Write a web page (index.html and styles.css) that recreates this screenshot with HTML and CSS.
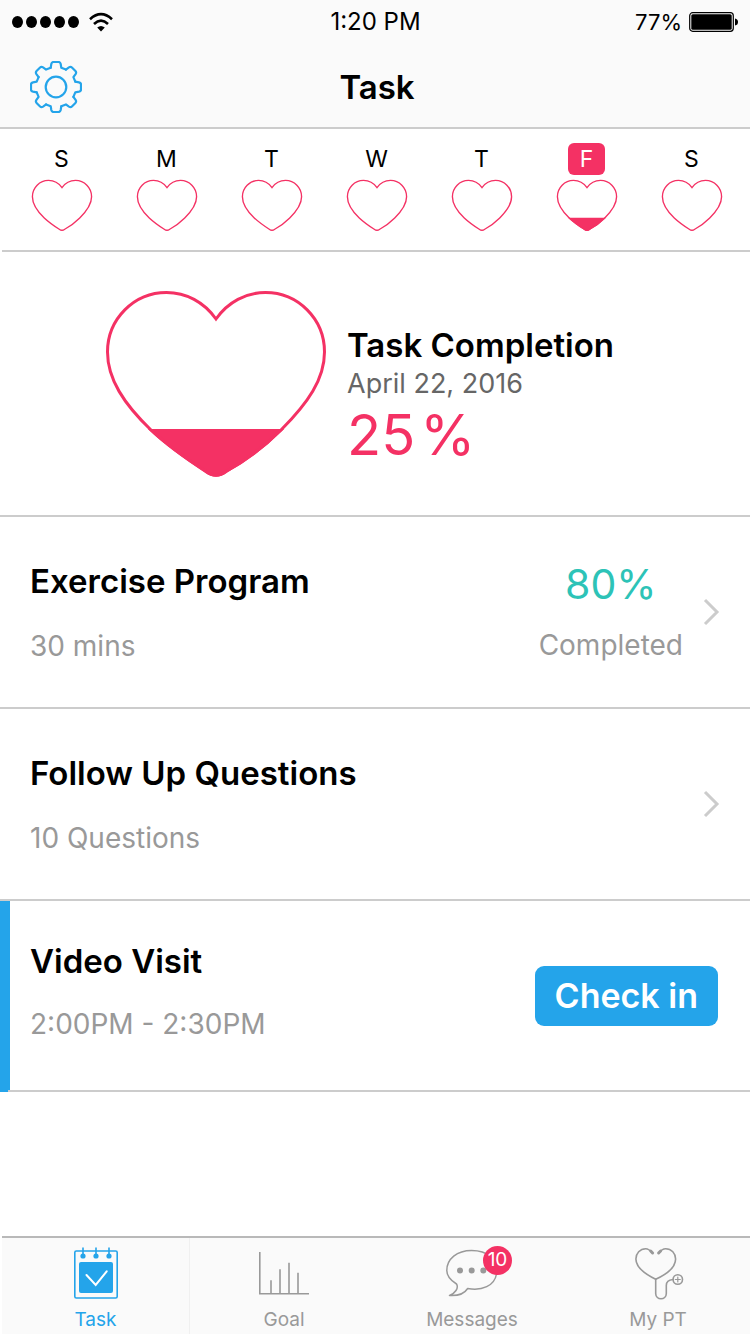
FILE: index.html
```html
<!DOCTYPE html>
<html lang="en">
<head>
<meta charset="utf-8">
<meta name="viewport" content="width=device-width, initial-scale=1">
<title>Task</title>
<link rel="stylesheet" href="styles.css">
</head>
<body>
<svg class="defs" aria-hidden="true">
  <defs>
    <path id="heart" d="M110 28C98 11 80 1.5 60.5 1.5C28 1.5 1.5 28 1.5 61C1.5 88 18 113 45 139C62 155 83 169.500 100 180.500Q110 188 120 180.500C137 171 158 156 175 139C202 112 218.500 88 218.500 61C218.500 28 192 1.5 159.500 1.5C140 1.5 122 11 110 28Z"/>
    <clipPath id="quarter"><rect x="0" y="138" width="220" height="50"/></clipPath>
    <path id="tooth" d="M-5.300-19.300L-4.700-23Q-4.300-25-2.500-25H2.500Q4.300-25 4.700-23L5.300-19.300L9.900-17.400"/>
  </defs>
</svg>

<header class="top">
  <div class="status">
    <div class="signal">
      <i class="dot"></i><i class="dot"></i><i class="dot"></i><i class="dot"></i><i class="dot"></i>
      <svg class="wifi" width="24" height="20" viewBox="0 0 24 20" fill="none" stroke="#000" stroke-width="2.600">
        <path d="M1 7.200Q12-2.800 23 7.200"/><path d="M5 12Q12 5.400 19 12"/><path d="M8.200 15.400Q12 12.400 15.800 15.400L12 19.600Z" fill="#000" stroke="none"/>
      </svg>
    </div>
    <span class="time">1:20 PM</span>
    <div class="power">
      <span>77%</span>
      <svg width="50" height="20" viewBox="0 0 50 20">
        <rect x=".7" y=".7" width="43.600" height="18.600" rx="3" fill="none" stroke="#000" stroke-width="1.200"/>
        <rect x="2.300" y="2.300" width="40.400" height="15.400" rx="1.500"/>
        <path d="M46 6.500Q49 7 49 10T46 13.500Z"/>
      </svg>
    </div>
  </div>
  <div class="nav">
    <button class="gear" aria-label="Settings">
      <svg width="52" height="52" viewBox="-26 -26 52 52" fill="none" stroke="#24a4ea" stroke-width="2.200" stroke-linecap="round" stroke-linejoin="round">
        <circle r="10.300"/>
        <use href="#tooth"/><use href="#tooth" transform="rotate(45)"/><use href="#tooth" transform="rotate(90)"/><use href="#tooth" transform="rotate(135)"/><use href="#tooth" transform="rotate(180)"/><use href="#tooth" transform="rotate(225)"/><use href="#tooth" transform="rotate(270)"/><use href="#tooth" transform="rotate(315)"/>
      </svg>
    </button>
    <h1 class="title">Task</h1>
  </div>
</header>

<main>
  <ol class="week">
    <li class="day"><span class="letter">S</span><svg class="mini" viewBox="0 0 220 187"><use href="#heart"/></svg></li>
    <li class="day"><span class="letter">M</span><svg class="mini" viewBox="0 0 220 187"><use href="#heart"/></svg></li>
    <li class="day"><span class="letter">T</span><svg class="mini" viewBox="0 0 220 187"><use href="#heart"/></svg></li>
    <li class="day"><span class="letter">W</span><svg class="mini" viewBox="0 0 220 187"><use href="#heart"/></svg></li>
    <li class="day"><span class="letter">T</span><svg class="mini" viewBox="0 0 220 187"><use href="#heart"/></svg></li>
    <li class="day"><span class="letter today">F</span><svg class="mini" viewBox="0 0 220 187"><use href="#heart"/><g clip-path="url(#quarter)"><use href="#heart" fill="#f43164"/></g></svg></li>
    <li class="day"><span class="letter">S</span><svg class="mini" viewBox="0 0 220 187"><use href="#heart"/></svg></li>
  </ol>

  <section class="summary">
    <svg class="big" viewBox="0 0 220 187"><use href="#heart"/><g clip-path="url(#quarter)"><use href="#heart" fill="#f43164"/></g></svg>
    <div class="facts">
      <h2 class="heading">Task Completion</h2>
      <p class="date">April 22, 2016</p>
      <p class="percent">25&#8202;%</p>
    </div>
  </section>

  <section class="row">
    <div class="info">
      <h2 class="heading">Exercise Program</h2>
      <p class="note">30 mins</p>
    </div>
    <div class="progress">
      <p class="score">80%</p>
      <p class="note">Completed</p>
    </div>
    <svg class="chevron" width="17" height="28" viewBox="0 0 17 28"><path d="M2 2L14 14L2 26"/></svg>
  </section>

  <section class="row">
    <div class="info">
      <h2 class="heading">Follow Up Questions</h2>
      <p class="note">10 Questions</p>
    </div>
    <svg class="chevron" width="17" height="28" viewBox="0 0 17 28"><path d="M2 2L14 14L2 26"/></svg>
  </section>

  <section class="row visit">
    <div class="info">
      <h2 class="heading">Video Visit</h2>
      <p class="note">2:00PM - 2:30PM</p>
    </div>
    <button class="checkin">Check in</button>
  </section>
</main>

<nav class="tabs">
  <a class="tab active" href="#task">
    <svg width="44" height="52" viewBox="0 0 44 52" fill="none" stroke="#24a4ea" stroke-width="1.600">
      <rect x=".8" y="4" width="42.400" height="47" rx="1.500"/>
      <path d="M9 .5V9M22 .5V9M35 .5V9"/>
      <g fill="#24a4ea" stroke="none"><circle cx="9" cy="9" r="2.600"/><circle cx="22" cy="9" r="2.600"/><circle cx="35" cy="9" r="2.600"/><rect x="5" y="15" width="34" height="31" rx="2"/></g>
      <path d="M12.500 28L21.700 38L32.700 24.300" stroke="#fff" stroke-width="2" stroke-linecap="round"/>
    </svg>
    <span>Task</span>
  </a>
  <a class="tab" href="#goal">
    <svg width="50" height="52" viewBox="0 0 50 52" fill="none" stroke="#999" stroke-width="1.600">
      <path d="M.8 5V46.700H50M12 46V33.300M21 46V22.300M30 46V15.700M39 46V25.700"/>
    </svg>
    <span>Goal</span>
  </a>
  <a class="tab" href="#messages">
    <div class="bubble">
      <svg width="52" height="52" viewBox="0 0 52 52" fill="none" stroke="#999" stroke-width="1.500" stroke-linejoin="round">
        <path d="M25.600 3.500C11 3.500.8 12 .8 23.500C.8 29 4 33 10.500 37C13 41 9 46.500 3.500 48.500C12 49 18.500 46.500 21.700 41.500C36 44 48.500 39 50.500 27C52 12 41 3.500 25.600 3.500Z"/>
        <g fill="#999" stroke="none"><circle cx="14" cy="23.500" r="3"/><circle cx="25.700" cy="23.500" r="3"/><circle cx="37.300" cy="23.500" r="3"/></g>
      </svg>
      <span class="badge">10</span>
    </div>
    <span>Messages</span>
  </a>
  <a class="tab" href="#pt">
    <svg class="scope" width="46" height="52" viewBox="0 0 46 52" fill="none" stroke="#999" stroke-width="1.600" stroke-linecap="round">
      <path d="M17.500 6C15 3 13 1.700 10.700 1.700C5 1.700.9 6.500.9 12C.9 21 12 28 20.700 32.300C30 28 40.600 21 40.600 12C40.600 6.500 36.500 1.700 30.700 1.700C28.500 1.700 26 3 24 6"/>
      <path d="M15.700 4L17.600 6M25.600 4L23.600 6" stroke-width="3"/>
      <path d="M20.700 32.300V46.500C20.700 53.500 31.300 53.500 31.300 46.500V38.500Q31.300 33 38 32.500"/>
      <circle cx="42.800" cy="32.500" r="4.700"/><path d="M40.300 32.500H45.300M42.800 30V35" stroke-width="1.200"/>
    </svg>
    <span>My PT</span>
  </a>
</nav>
</body>
</html>
```
FILE: styles.css
```css
* { box-sizing: border-box; }

body {
  margin: 0;
  min-height: 100vh;
  display: flex;
  flex-direction: column;
  background: #fff;
  color: #000;
  font-family: Inter, "Liberation Sans", sans-serif;
}

h1, h2, p, ol { margin: 0; padding: 0; }
svg { display: block; flex: none; }
button { border: 0; padding: 0; background: none; font: inherit; cursor: pointer; }
.defs { position: absolute; width: 0; height: 0; }

.top { background: #fafafa; border-bottom: 2px solid #ccc; }

.status {
  display: grid;
  grid-template-columns: 1fr auto 1fr;
  align-items: center;
  height: 43px;
  padding: 0 11px 0 12px;
}
.signal { display: flex; align-items: center; gap: 3px; }
.dot { width: 11px; height: 12px; border-radius: 50%; background: #000; }
.wifi { margin-left: 7px; }
.time { font-size: 24px; }
.power { display: flex; align-items: center; justify-content: flex-end; gap: 7px; font-size: 22px; }

.nav {
  display: grid;
  grid-template-columns: 1fr auto 1fr;
  align-items: center;
  height: 84px;
  padding: 4px 26px 0 30px;
}
.gear { justify-self: start; }
.title { font-size: 33px; line-height: 40px; font-weight: 600; }

.week {
  display: grid;
  grid-template-columns: repeat(7, 1fr);
  margin-left: 2px;
  padding: 14px 6px 19px 7px;
  border-bottom: 2px solid #ccc;
  list-style: none;
}
.day { display: flex; flex-direction: column; align-items: center; gap: 5px; }
.letter {
  width: 37px;
  border-radius: 6px;
  font-size: 23px;
  line-height: 32px;
  text-align: center;
}
.today { background: #f43164; color: #fff; }
.mini, .big { fill: none; stroke: #f43164; overflow: visible; }
.mini { width: 60px; height: 51px; stroke-width: 5; }
.big { width: 220px; height: 187px; stroke-width: 3; }

.summary {
  display: flex;
  gap: 21px;
  padding: 39px 30px 37px 106px;
  border-bottom: 2px solid #ccc;
}
.facts { padding-top: 34px; }
.heading { font-size: 33px; line-height: 40px; font-weight: 600; }
.date { font-size: 27px; line-height: 38px; color: #666; }
.percent { font-size: 56px; line-height: 64px; color: #f43164; }

.row {
  display: flex;
  align-items: center;
  gap: 20px;
  min-height: 192px;
  padding: 0 30px;
  border-bottom: 2px solid #ccc;
}
.info { display: grid; gap: 28px; flex: 1; }
.note { font-size: 28px; line-height: 34px; color: #999; }
.progress { display: grid; gap: 20px; padding-bottom: 2px; text-align: center; }
.score { font-size: 41px; line-height: 48px; color: #2dc3b7; }
.chevron { fill: none; stroke: #ccc; stroke-width: 3; }

.visit { min-height: 191px; padding-right: 32px; background: linear-gradient(#24a4ea, #24a4ea) border-box left / 10px 100% no-repeat; border-image: linear-gradient(90deg, #24a4ea 10px, #ccc 10px) 2; }
.visit .info { gap: 26px; padding-bottom: 10px; }
.checkin {
  padding: 10px 20px;
  border-radius: 9px;
  background: #24a4ea;
  color: #fff;
  font-size: 34px;
  line-height: 40px;
  font-weight: 600;
}

.tabs {
  display: grid;
  grid-template-columns: 188fr 188fr 188fr 184fr;
  margin: auto 0 0 2px;
  border-top: 2px solid #b9b9b9;
  background: #fafafa;
}
.tab {
  display: flex;
  flex-direction: column;
  align-items: center;
  justify-content: space-between;
  height: 96px;
  padding: 9px 0 2px;
  color: #999;
  font-size: 19px;
  line-height: 24px;
  text-decoration: none;
}
.active { color: #24a4ea; border-right: 1px solid #f0f0f0; }
.scope { overflow: visible; }
.bubble { position: relative; }
.badge {
  position: absolute;
  top: -1px;
  left: 37px;
  width: 29px;
  height: 29px;
  border-radius: 50%;
  background: #f43164;
  color: #fff;
  line-height: 27px;
  text-align: center;
}
```
